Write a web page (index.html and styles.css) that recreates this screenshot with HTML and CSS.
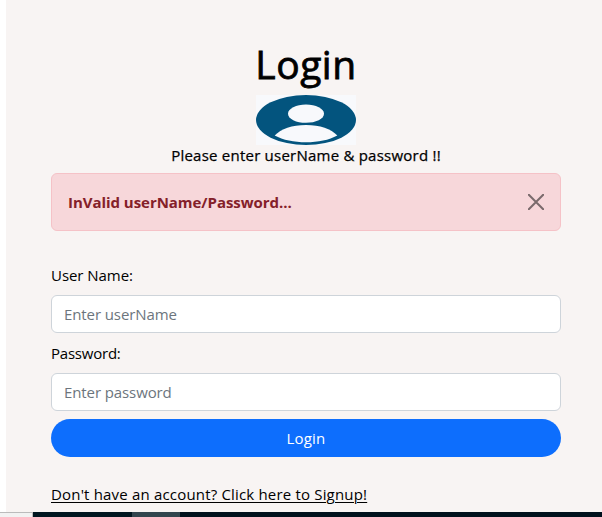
FILE: index.html
```html
<!DOCTYPE html>
<html lang="en">
<head>
<meta charset="utf-8">
<title>Login</title>
<link rel="stylesheet" href="styles.css">
</head>
<body>
<main class="page">
  <header class="intro">
    <h1 class="title">Login</h1>
    <svg class="avatar" viewBox="0 0 100 50">
      <rect width="100" height="50" fill="#f8f9fc"/>
      <ellipse cx="50" cy="25" rx="50" ry="25" fill="#03547e"/>
      <ellipse cx="50" cy="18.7" rx="18" ry="9.1" fill="#f8f9fc"/>
      <path d="M18.700 40.500C25 34 36 30 50 30s25 4 31.300 10.500C73 45 62 47.300 50 47.300S27 45 18.700 40.500z" fill="#f8f9fc"/>
    </svg>
    <p class="hint">Please enter userName &amp; password !!</p>
  </header>
  <div class="alert" role="alert">
    <strong class="message">InValid userName/Password...</strong>
    <button class="close" type="button" aria-label="Close"><svg viewBox="0 0 16 16" width="16" height="16"><path d="M.8.8l14.400 14.400M15.200.8L.8 15.200" stroke="#000" stroke-width="2" stroke-linecap="round"/></svg></button>
  </div>
  <form class="form">
    <label class="label" for="user">User Name:</label>
    <input class="input" id="user" type="text" placeholder="Enter userName">
    <label class="label label-pass" for="pass">Password:</label>
    <input class="input" id="pass" type="password" placeholder="Enter password">
    <button class="submit" type="button">Login</button>
  </form>
  <a class="signup" href="#">Don't have an account? Click here to Signup!</a>
</main>
<footer class="taskbar"><div class="search"></div><div class="bar"></div><div class="active"></div><div class="bar rest"></div></footer>
</body>
</html>
```
FILE: styles.css
```css
* { box-sizing: border-box; }
body {
  margin: 0;
  width: 602px;
  height: 517px;
  overflow: hidden;
  background: #fff;
  color: #000;
  font: 400 15px/24px "Open Sans", "Noto Sans", sans-serif;
}
.page {
  height: 512px;
  margin-left: 6px;
  padding: 41px 41px 0 45px;
  background: #f8f4f3;
}
.intro { display: flex; flex-direction: column; align-items: center; }
.title {
  margin: 0;
  height: 54px;
  font-size: 39px;
  font-weight: 400;
  line-height: 46px;
  letter-spacing: .5px;
  -webkit-text-stroke: .8px #000;
}
.avatar { display: block; width: 100px; height: 50px; }
.hint {
  margin: 0;
  height: 28px;
  line-height: 20px;
  letter-spacing: .23px;
  white-space: nowrap;
  -webkit-text-stroke: .25px #000;
}
.alert {
  display: flex;
  align-items: center;
  justify-content: space-between;
  height: 58px;
  padding: 0 16px;
  border: 1px solid #f5c2c7;
  border-radius: 6px;
  background: #f7d7da;
  color: #842029;
}
.message { font-weight: 700; letter-spacing: -.04px; }
.close { display: flex; padding: 0; border: 0; background: none; opacity: .5; }
.form { display: flex; flex-direction: column; padding-top: 32px; }
.label { height: 32px; align-self: flex-start; letter-spacing: -.05px; }
.label-pass { margin-top: 8px; letter-spacing: -.22px; }
.input {
  width: 100%;
  height: 38px;
  padding: 6px 12px;
  border: 1px solid #ced4da;
  border-radius: 6px;
  background: #fff;
  font: inherit;
  letter-spacing: -.1px;
}
.input::placeholder { color: #6c757d; opacity: 1; }
.submit {
  height: 38px;
  margin-top: 8px;
  border: 0;
  border-radius: 19px;
  background: #0d6efd;
  color: #fff;
  font: inherit;
  letter-spacing: .2px;
}
.signup {
  display: inline-block;
  margin-top: 25px;
  color: #000;
  letter-spacing: .18px;
  text-decoration: underline;
  text-decoration-thickness: 1px;
  text-underline-offset: 2px;
}
.taskbar { display: flex; height: 5px; }
.search { width: 33px; background: #f2f2f2; border-top: 1px solid #bbb; border-right: 1px solid #bbb; }
.bar { width: 99px; background: #001620; }
.active { width: 48px; background: #32454e; }
.rest { flex: 1; background: #00111c; }
```
